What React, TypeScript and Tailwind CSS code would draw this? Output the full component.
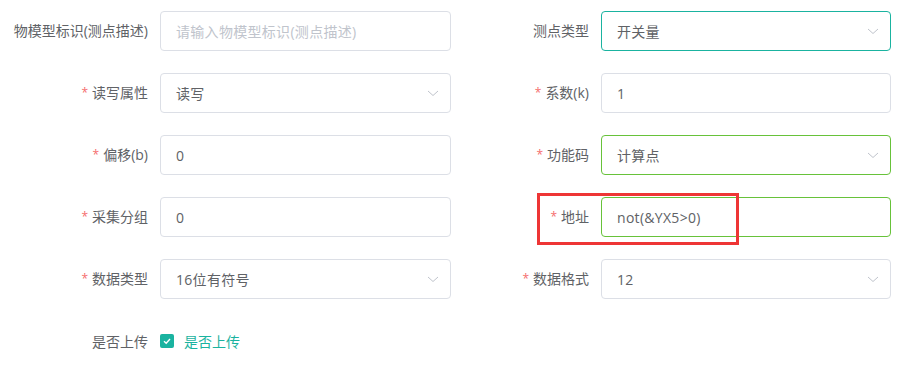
import React from "react";

const FONT = { fontFamily: '"Open Sans", "Noto Sans CJK SC", sans-serif' };

function Chevron() {
  return (
    <svg width="14" height="14" viewBox="0 0 14 14" className="shrink-0">
      <path d="M2 5 L7 9.5 L12 5" fill="none" stroke="#c0c4cc" strokeWidth="1" />
    </svg>
  );
}

type FieldProps = {
  label: string;
  required?: boolean;
  value?: string;
  placeholder?: string;
  select?: boolean;
  border?: string;
  width: string;
  labelWidth: string;
};

function Field({ label, required, value, placeholder, select, border, width, labelWidth }: FieldProps) {
  return (
    <div className="flex items-center h-[40px]">
      <div className={`${labelWidth} pr-[12px] text-right text-[14px] text-[#606266] leading-[40px] whitespace-nowrap`}>
        {required && <span className="text-[#f56c6c] text-[12px] mr-[4px] relative top-[-1px]">*</span>}
        {label}
      </div>
      <div
        className={`${width} h-[40px] rounded-[4px] border flex items-center pl-[15px] pr-[10px] ${border ?? "border-[#dcdfe6]"}`}
      >
        <span className={`flex-1 text-[14px] tracking-[0.3px] ${value ? "text-[#606266]" : "text-[#c0c4cc]"}`}>
          {value ?? placeholder}
        </span>
        {select && <Chevron />}
      </div>
    </div>
  );
}

const L = { width: "w-[291px]", labelWidth: "w-[160px]" };
const R = { width: "w-[290px]", labelWidth: "w-[140px]" };

export default function App() {
  return (
    <div className="relative w-[924px] h-[365px] bg-white" style={FONT}>
      <div className="pt-[11px] flex flex-col gap-[22px]">
        <div className="flex">
          <div className="w-[461px]">
            <Field label="物模型标识(测点描述)" placeholder="请输入物模型标识(测点描述)" {...L} />
          </div>
          <Field label="测点类型" value="开关量" select border="border-[#1ab3a0]" {...R} />
        </div>
        <div className="flex">
          <div className="w-[461px]">
            <Field label="读写属性" required value="读写" select {...L} />
          </div>
          <Field label="系数(k)" required value="1" {...R} />
        </div>
        <div className="flex">
          <div className="w-[461px]">
            <Field label="偏移(b)" required value="0" {...L} />
          </div>
          <Field label="功能码" required value="计算点" select border="border-[#67c23a]" {...R} />
        </div>
        <div className="flex">
          <div className="w-[461px]">
            <Field label="采集分组" required value="0" {...L} />
          </div>
          <Field label="地址" required value="not(&YX5>0)" border="border-[#67c23a]" {...R} />
        </div>
        <div className="flex">
          <div className="w-[461px]">
            <Field label="数据类型" required value="16位有符号" select {...L} />
          </div>
          <Field label="数据格式" required value="12" select {...R} />
        </div>
        <div className="flex items-center h-[40px]">
          <div className="w-[160px] pr-[12px] text-right text-[14px] text-[#606266]">是否上传</div>
          <div className="flex items-center gap-[10px]">
            <span className="w-[14px] h-[14px] rounded-[2px] bg-[#1ab3a0] flex items-center justify-center">
              <svg width="10" height="10" viewBox="0 0 10 10">
                <path d="M2 5.2 L4.2 7.2 L8 3" fill="none" stroke="white" strokeWidth="1.4" />
              </svg>
            </span>
            <span className="text-[14px] text-[#1ab3a0]">是否上传</span>
          </div>
        </div>
      </div>
      <div className="absolute left-[537px] top-[193px] w-[202px] h-[52px] border-[3px] border-[#ee3535]" />
    </div>
  );
}
